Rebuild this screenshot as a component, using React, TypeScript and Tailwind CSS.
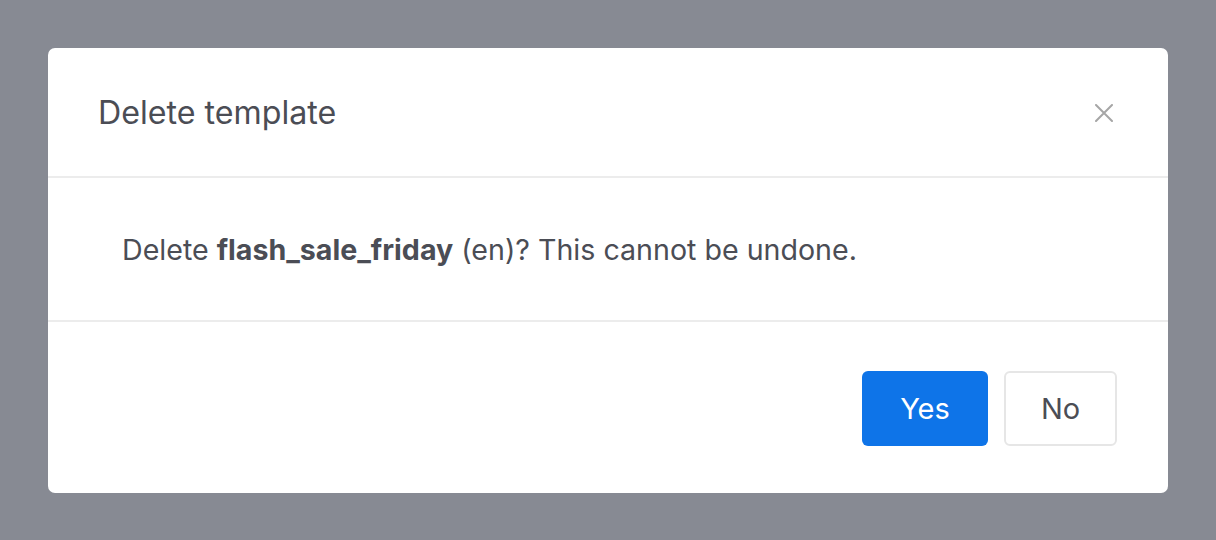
export default function App() {
  return (
    <div
      className="w-[1216px] h-[540px] bg-[#878a93] pt-[48px] px-[48px]"
      style={{ fontFamily: "Inter, 'Noto Sans', sans-serif" }}
    >
      <div className="bg-white rounded-[7px] w-[1120px] h-[445px] flex flex-col">
        {/* Header */}
        <div className="h-[130px] flex items-center justify-between pl-[50px] pr-[55px] border-b-2 border-[#ececec]">
          <h2 className="text-[32.2px] text-[#4b4d55] font-normal pt-[2px]">Delete template</h2>
          <svg width="18" height="18" viewBox="0 0 18 18" className="mt-[2px]">
            <path d="M1 1L17 17M17 1L1 17" stroke="#a6a6a6" strokeWidth="2" strokeLinecap="round" />
          </svg>
        </div>

        {/* Body */}
        <div className="h-[144px] flex items-center pl-[74px] border-b-2 border-[#ececec]">
          <p className="text-[28.6px] text-[#4b4d55] pt-[2px]">
            Delete <span className="font-bold">flash_sale_friday</span> (en)? This cannot be undone.
          </p>
        </div>

        {/* Footer */}
        <div className="flex-1 flex items-center justify-end gap-[16px] pr-[51px] pt-[2px]">
          <button className="w-[126px] h-[75px] rounded-[6px] bg-[#0e74e8] text-white text-[29px]">Yes</button>
          <button className="w-[113px] h-[75px] rounded-[6px] border-2 border-[#e6e6e6] bg-white text-[#4b4d55] text-[29px]">No</button>
        </div>
      </div>
    </div>
  );
}
